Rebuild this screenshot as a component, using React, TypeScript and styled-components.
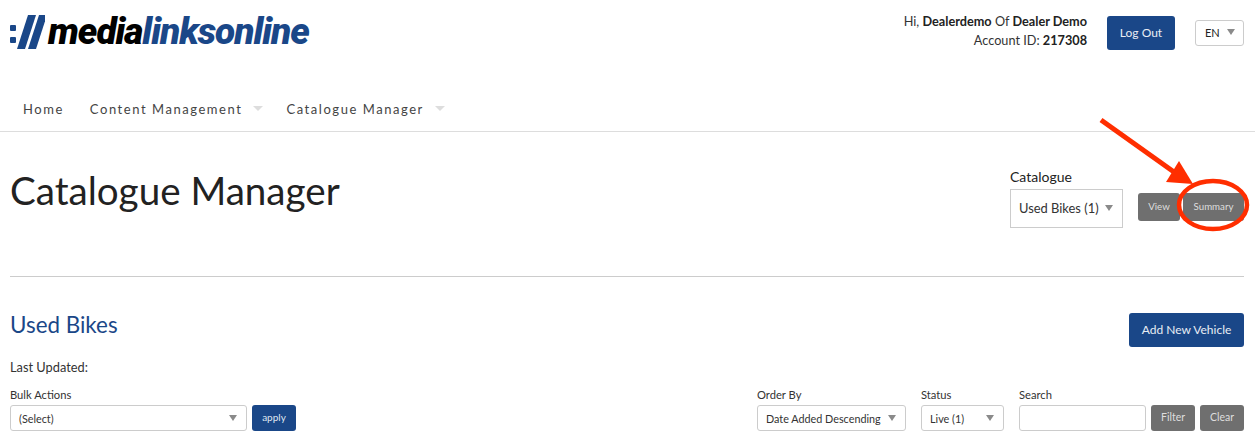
import React from "react";
import styled, { createGlobalStyle } from "styled-components";

const GlobalStyle = createGlobalStyle`
  html, body {
    margin: 0;
    padding: 0;
    background: #fff;
    overflow: hidden;
  }
  * {
    box-sizing: border-box;
  }
`;

const Select: React.FC<{ label: string; width: number; height?: number; size?: number; square?: boolean }> = ({
  label,
  width,
  height = 26,
  size = 10.8,
  square,
}) => (
  <SelectBox $width={width} $height={height} $size={size} $square={square}>
    <span>{label}</span>
    <Caret />
  </SelectBox>
);

const App: React.FC = () => {
  return (
    <Page>
      <GlobalStyle />
      <Header>
        <TopRow>
          <Logo>
            <svg width="35" height="34" viewBox="0 0 35 34">
              <rect x="0" y="10" width="6" height="6" rx="1" fill="#1a4788" />
              <rect x="0" y="22" width="6" height="6" rx="1" fill="#1a4788" />
              <polygon points="17,0 25,0 14,34 6,34" fill="#1a4788" transform="translate(1 0)" />
              <polygon points="29,0 37,0 26,34 18,34" fill="#1a4788" />
            </svg>
            <LogoText>
              media<LogoBlue>linksonline</LogoBlue>
            </LogoText>
          </Logo>
          <Account>
            <Greeting>
              <div>
                Hi, <b>Dealerdemo</b> Of <b>Dealer Demo</b>
              </div>
              <div>
                Account ID: <b>217308</b>
              </div>
            </Greeting>
            <LogOut>Log Out</LogOut>
            <LangSelect>
              <span>EN</span>
              <Caret />
            </LangSelect>
          </Account>
        </TopRow>
        <Nav>
          <NavItem>Home</NavItem>
          <NavItem $menu>Content Management</NavItem>
          <NavItem $menu>Catalogue Manager</NavItem>
        </Nav>
      </Header>

      <Main>
        <TitleRow>
          <Title>Catalogue Manager</Title>
          <CatalogueControls>
            <Field>
              <CatalogueLabel>Catalogue</CatalogueLabel>
              <Select label="Used Bikes (1)" width={113} height={39} size={12.9} square />
            </Field>
            <GreyButton $width={42} $height={28}>
              View
            </GreyButton>
            <GreyButton $width={61} $height={28}>
              Summary
            </GreyButton>
          </CatalogueControls>
        </TitleRow>

        <SectionHead>
          <SectionTitle>Used Bikes</SectionTitle>
          <AddButton>Add New Vehicle</AddButton>
        </SectionHead>
        <LastUpdated>Last Updated:</LastUpdated>

        <Toolbar>
          <ToolGroup>
            <Field>
              <SmallLabel>Bulk Actions</SmallLabel>
              <Select label="(Select)" width={237} />
            </Field>
            <ApplyButton>apply</ApplyButton>
          </ToolGroup>
          <FilterGroup>
            <Field>
              <SmallLabel>Order By</SmallLabel>
              <Select label="Date Added Descending" width={149} />
            </Field>
            <Field>
              <SmallLabel>Status</SmallLabel>
              <Select label="Live (1)" width={83} />
            </Field>
            <SearchGroup>
              <Field>
                <SmallLabel>Search</SmallLabel>
                <SearchInput />
              </Field>
              <GreyButton $width={44} $height={26} $size={10.5}>
                Filter
              </GreyButton>
              <GreyButton $width={44} $height={26} $size={10.5}>
                Clear
              </GreyButton>
            </SearchGroup>
          </FilterGroup>
        </Toolbar>
      </Main>

      <Annotation width="170" height="125" viewBox="0 0 170 125">
        <line x1="3" y1="3" x2="76" y2="55" stroke="#ff2e00" strokeWidth="5" />
        <polygon points="95,67 81,44 68,65" fill="#ff2e00" />
        <ellipse cx="115" cy="88" rx="34" ry="24" fill="none" stroke="#ff2e00" strokeWidth="4.5" />
      </Annotation>
    </Page>
  );
};

export default App;

const Page = styled.div`
  position: relative;
  width: 1255px;
  height: 445px;
  overflow: hidden;
  font-family: Lato, "Open Sans", sans-serif;
  color: #222;
`;

const Header = styled.header`
  height: 132px;
  border-bottom: 1px solid #ddd;
  display: flex;
  flex-direction: column;
  justify-content: space-between;
`;

const TopRow = styled.div`
  display: flex;
  justify-content: space-between;
  align-items: flex-start;
  padding: 15px 11px 0 10px;
`;

const Logo = styled.div`
  display: flex;
  align-items: center;
  gap: 3px;
  height: 34px;
`;

const LogoText = styled.span`
  font-family: Roboto, Inter, sans-serif;
  font-weight: 900;
  font-style: italic;
  font-size: 37px;
  letter-spacing: -1.05px;
  line-height: 34px;
  color: #000;
`;

const LogoBlue = styled.span`
  color: #1a4788;
`;

const Account = styled.div`
  display: flex;
  align-items: flex-start;
`;

const Greeting = styled.div`
  font-size: 12.7px;
  line-height: 19px;
  margin-top: -3px;
  text-align: right;
  color: #333;
  margin-right: 20px;

  b {
    font-weight: 700;
    color: #222;
  }
`;

const LogOut = styled.button`
  width: 68px;
  height: 34px;
  margin: 1px 20px 0 0;
  padding: 0 0 2px;
  border: none;
  border-radius: 3px;
  background: #1a4788;
  color: #e8edf4;
  font-family: inherit;
  font-size: 12px;
`;

const Caret = styled.i`
  width: 0;
  height: 0;
  border-left: 4px solid transparent;
  border-right: 4px solid transparent;
  border-top: 6px solid #8a8a8a;
`;

const LangSelect = styled.div`
  width: 49px;
  height: 26px;
  margin-top: 5px;
  padding: 0 8px 2px 9px;
  display: flex;
  align-items: center;
  justify-content: space-between;
  border: 1px solid #ccc;
  border-radius: 3px;
  font-size: 11px;
`;

const Nav = styled.nav`
  display: flex;
  padding: 0 0 13px 23px;
`;

const NavItem = styled.a<{ $menu?: boolean }>`
  display: flex;
  align-items: center;
  margin-right: ${(p) => (p.$menu ? "23px" : "26px")};
  font-size: 13px;
  line-height: 17px;
  letter-spacing: 1.55px;
  color: #444;

  ${(p) =>
    p.$menu &&
    `
    &::after {
      content: "";
      margin: 0 0 3px 11px;
      border-left: 5px solid transparent;
      border-right: 5px solid transparent;
      border-top: 5px solid #ddd;
    }
  `}
`;

const Main = styled.main`
  padding: 0 11px 0 10px;
`;

const TitleRow = styled.div`
  height: 145px;
  border-bottom: 1px solid #ccc;
  display: flex;
  justify-content: space-between;
  align-items: flex-start;
`;

const Title = styled.h1`
  margin: 35px 0 0;
  font-size: 38.6px;
  line-height: 46px;
  font-weight: 400;
  color: #222;
`;

const CatalogueControls = styled.div`
  display: flex;
  align-items: flex-start;
  gap: 3px;
  padding-top: 36px;
`;

const Field = styled.div`
  display: flex;
  flex-direction: column;
`;

const CatalogueLabel = styled.label`
  font-size: 14px;
  line-height: 18px;
  margin-bottom: 3px;
  color: #222;
`;

const SelectBox = styled.div<{ $width: number; $height: number; $size: number; $square?: boolean }>`
  width: ${(p) => p.$width}px;
  height: ${(p) => p.$height}px;
  margin-right: ${(p) => (p.$square ? "12px" : "0")};
  padding: ${(p) => (p.$square ? "0 9px 1px 8px" : "0 9px 0 8px")};
  display: flex;
  align-items: center;
  justify-content: space-between;
  background: #fff;
  border: 1px solid #ccc;
  border-radius: ${(p) => (p.$square ? "0" : "3px")};
  font-size: ${(p) => p.$size}px;
  color: #333;
`;

const GreyButton = styled.button<{ $width: number; $height: number; $size?: number }>`
  width: ${(p) => p.$width}px;
  height: ${(p) => p.$height}px;
  margin-top: ${(p) => (p.$height === 28 ? "25px" : "0")};
  padding: 0 0 2px;
  border: none;
  border-radius: 3px;
  background: #6f6f6f;
  color: #dedede;
  font-family: inherit;
  font-size: ${(p) => p.$size ?? 9.7}px;
`;

const SectionHead = styled.div`
  display: flex;
  justify-content: space-between;
  align-items: flex-start;
  padding-top: 34px;
`;

const SectionTitle = styled.h2`
  margin: 0;
  font-size: 22.4px;
  line-height: 28px;
  font-weight: 400;
  color: #1a4788;
`;

const AddButton = styled.button`
  width: 115px;
  height: 34px;
  margin-top: 2px;
  padding: 0 0 2px;
  border: none;
  border-radius: 3px;
  background: #1a4788;
  color: #e8edf4;
  font-family: inherit;
  font-size: 12px;
`;

const LastUpdated = styled.div`
  margin-top: 12px;
  font-size: 12.8px;
  line-height: 17px;
  color: #333;
`;

const Toolbar = styled.div`
  display: flex;
  justify-content: space-between;
  align-items: flex-end;
  margin-top: 12px;
`;

const ToolGroup = styled.div`
  display: flex;
  align-items: flex-end;
  gap: 5px;
`;

const FilterGroup = styled.div`
  display: flex;
  align-items: flex-end;
  gap: 15px;
`;

const SearchGroup = styled.div`
  display: flex;
  align-items: flex-end;
  gap: 5px;
`;

const SmallLabel = styled.label`
  font-size: 11.2px;
  line-height: 14px;
  margin-bottom: 3px;
  color: #333;
`;

const ApplyButton = styled.button`
  width: 44px;
  height: 26px;
  padding: 0 0 2px;
  border: none;
  border-radius: 3px;
  background: #1a4788;
  color: #dfe6f0;
  font-family: inherit;
  font-size: 10px;
`;

const SearchInput = styled.input`
  width: 127px;
  height: 26px;
  border: 1px solid #ccc;
  border-radius: 3px;
  outline: none;
`;

// annotation drawn over the screenshot, so it sits above the page
const Annotation = styled.svg`
  position: absolute;
  left: 1098px;
  top: 117px;
  pointer-events: none;
`;
